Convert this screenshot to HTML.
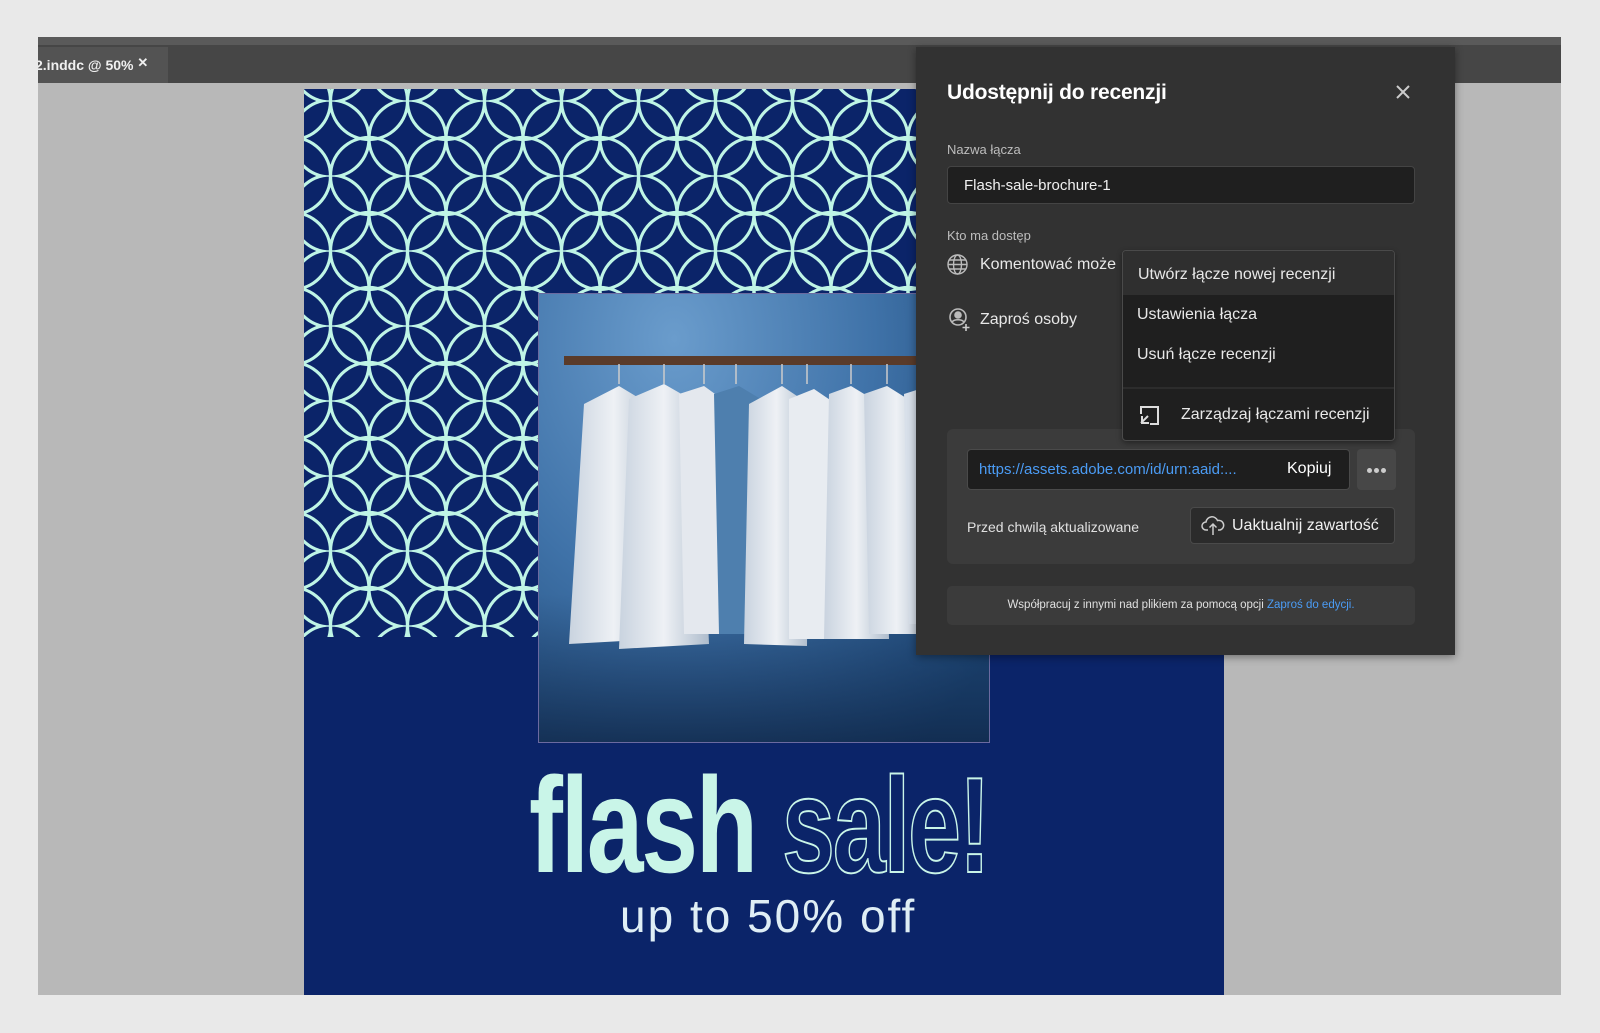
<!DOCTYPE html>
<html><head><meta charset="utf-8">
<style>
*{margin:0;padding:0;box-sizing:border-box}
body{width:1600px;height:1033px;background:#e9e9e9;position:relative;overflow:hidden;font-family:"Liberation Sans",sans-serif}
.a{position:absolute}
.t{color:#e8e8e8;white-space:nowrap}
</style></head><body>
<div class="a" style="left:38px;top:37px;width:1523px;height:958px;background:#b8b8b8"></div>
<div class="a" style="left:38px;top:37px;width:1523px;height:8px;background:#5a5a5a"></div>
<div class="a" style="left:38px;top:45px;width:1523px;height:38px;background:#464646"></div>
<div class="a" style="left:38px;top:47px;width:130px;height:36px;background:#535353"></div>
<div class="a t" style="left:35px;top:57px;font-size:14px;font-weight:bold;color:#f0f0f0">2.inddc @ 50% <span style="font-size:13px;position:relative;top:-3px">✕</span></div>
<div class="a" style="left:30px;top:45px;width:8px;height:40px;background:#e9e9e9"></div>

<!-- page -->
<div class="a" style="left:304px;top:89px;width:920px;height:906px;background:#0b2469;overflow:hidden">
<svg width="920" height="548" style="position:absolute;left:0;top:0">
<defs><pattern id="p" patternUnits="userSpaceOnUse" x="65" y="87" width="77" height="75">
<g fill="none" stroke="#bff5e6" stroke-width="3.2">
<circle cx="0" cy="0" r="38.5"/><circle cx="77" cy="0" r="38.5"/><circle cx="0" cy="75" r="38.5"/><circle cx="77" cy="75" r="38.5"/><circle cx="38.5" cy="37.5" r="38.5"/>
</g></pattern></defs>
<rect width="920" height="548" fill="url(#p)"/>
</svg>
</div>

<!-- photo -->
<div class="a" style="left:538px;top:293px;width:452px;height:450px;background:radial-gradient(ellipse at 30% 10%,#6a9ccc 0%,#3f72a8 45%,#1a426f 90%);border:1px solid #6b6aa0;overflow:hidden">
<svg width="452" height="450">
<defs><linearGradient id="j" x1="0" x2="1"><stop offset="0" stop-color="#c9d3df"/><stop offset=".5" stop-color="#eef1f5"/><stop offset="1" stop-color="#aebccc"/></linearGradient>
<linearGradient id="sh" x1="0" y1="0" x2="0" y2="1"><stop offset="0" stop-color="#1a3a66" stop-opacity="0"/><stop offset="1" stop-color="#10284a" stop-opacity=".8"/></linearGradient></defs>
<rect x="0" y="300" width="452" height="150" fill="url(#sh)"/>
<rect x="25" y="62" width="430" height="9" fill="#5a3b2a"/>
<g stroke="#ccc" stroke-width="1.5" fill="none">
<path d="M80 70v20M125 70v20M165 70v20M197 70v20M243 70v20M268 70v20M312 70v20M348 70v20"/></g>
<path d="M45 110 L80 92 L110 110 L120 345 L30 350 Z" fill="url(#j)"/>
<path d="M90 105 L125 90 L160 110 L170 350 L80 355 Z" fill="url(#j)"/>
<path d="M140 100 L165 92 L190 110 L190 340 L145 340 Z" fill="#e4e8ee"/>
<path d="M175 100 L200 92 L230 110 L235 340 L180 340 Z" fill="#4e7fae"/>
<path d="M210 110 L243 92 L270 110 L268 352 L205 350 Z" fill="url(#j)"/>
<path d="M250 105 L275 95 L300 112 L310 345 L250 345 Z" fill="#e8ecf1"/>
<path d="M290 100 L312 92 L345 112 L350 345 L285 345 Z" fill="url(#j)"/>
<path d="M325 100 L348 92 L380 112 L390 340 L330 340 Z" fill="url(#j)"/>
<path d="M365 100 L390 92 L420 112 L420 330 L370 330 Z" fill="#d8e0ea"/>
</svg>
</div>

<div class="a" style="left:529px;top:757px;font-size:136px;font-weight:bold;color:#c9f5e8;transform:scaleX(.75);transform-origin:left top;letter-spacing:-3px;line-height:1">flash</div>
<div class="a" style="left:782px;top:757px;font-size:136px;font-weight:bold;color:transparent;-webkit-text-stroke:2px #c9f5e8;transform:scaleX(.7);transform-origin:left top;letter-spacing:-3px;line-height:1">sale!</div>
<div class="a" style="left:620px;top:893px;font-size:46px;color:#dfeef5;line-height:1;letter-spacing:2px">up to 50% off</div>

<!-- panel -->
<div class="a" style="left:916px;top:47px;width:539px;height:608px;background:#323232;box-shadow:0 2px 8px rgba(0,0,0,.4)"></div>
<div class="a t" style="left:947px;top:81px;font-size:21px;font-weight:bold;color:#fff;letter-spacing:-.2px">Udostępnij do recenzji</div>
<svg class="a" style="left:1395px;top:84px" width="16" height="16"><path d="M2 2L14 14M14 2L2 14" stroke="#ccc" stroke-width="2"/></svg>
<div class="a t" style="left:947px;top:142px;font-size:13px;color:#bdbdbd">Nazwa łącza</div>
<div class="a" style="left:947px;top:166px;width:468px;height:38px;background:#1f1f1f;border:1px solid #444;border-radius:4px"></div>
<div class="a t" style="left:964px;top:177px;font-size:15px;color:#f0f0f0">Flash-sale-brochure-1</div>
<div class="a t" style="left:947px;top:228px;font-size:13px;color:#bdbdbd">Kto ma dostęp</div>
<svg class="a" style="left:947px;top:254px" width="21" height="21" fill="none" stroke="#bbb" stroke-width="1.4"><circle cx="10.5" cy="10.5" r="9.5"/><ellipse cx="10.5" cy="10.5" rx="4" ry="9.5"/><path d="M1 10.5h19M2.5 6h16M2.5 15h16"/></svg>
<div class="a t" style="left:980px;top:256px;font-size:16px">Komentować może</div>
<svg class="a" style="left:948px;top:308px" width="24" height="24" fill="none" stroke="#bbb" stroke-width="1.6"><circle cx="10" cy="9" r="8"/><circle cx="10" cy="7" r="3" fill="#bbb"/><path d="M4 14c2-3 10-3 12 0"/><path d="M18 16v7M14.5 19.5h7" stroke="#ccc"/></svg>
<div class="a t" style="left:980px;top:311px;font-size:16px">Zaproś osoby</div>

<div class="a" style="left:947px;top:429px;width:468px;height:135px;background:#3b3b3b;border-radius:6px"></div>
<div class="a" style="left:967px;top:449px;width:383px;height:41px;background:#1e1e1e;border:1px solid #4a4a4a;border-radius:4px"></div>
<div class="a t" style="left:979px;top:461px;font-size:15px;color:#4b9cf5">https://assets.adobe.com/id/urn:aaid:...</div>
<div class="a t" style="left:1287px;top:460px;font-size:16px;color:#fff">Kopiuj</div>
<div class="a" style="left:1357px;top:449px;width:39px;height:41px;background:#474747;border-radius:4px"></div>
<div class="a" style="left:1367px;top:468px;width:5px;height:5px;border-radius:50%;background:#ccc;box-shadow:7px 0 #ccc,14px 0 #ccc"></div>
<div class="a t" style="left:967px;top:519px;font-size:14px;color:#e0e0e0">Przed chwilą aktualizowane</div>
<div class="a" style="left:1190px;top:507px;width:205px;height:37px;background:#2b2b2b;border:1px solid #4a4a4a;border-radius:4px"></div>
<svg class="a" style="left:1201px;top:514px" width="24" height="22" fill="none" stroke="#ccc" stroke-width="1.5"><path d="M7 16H5a4 4 0 0 1 0-8 6 6 0 0 1 11.5-1.5A4.5 4.5 0 0 1 19 16h-2"/><path d="M12 21V10M8.5 13.5L12 10l3.5 3.5"/></svg>
<div class="a t" style="left:1232px;top:517px;font-size:16px;color:#f0f0f0">Uaktualnij zawartość</div>

<div class="a" style="left:947px;top:586px;width:468px;height:39px;background:#3b3b3b;border-radius:5px"></div>
<div class="a t" style="left:947px;top:599px;width:468px;text-align:center;font-size:11.5px;color:#e0e0e0">Współpracuj z innymi nad plikiem za pomocą opcji <span style="color:#4b9cf5">Zaproś do edycji.</span></div>

<!-- dropdown -->
<div class="a" style="left:1122px;top:250px;width:273px;height:191px;background:#1f1f1f;border:1px solid #4a4a4a;border-radius:4px;box-shadow:0 2px 6px rgba(0,0,0,.4);overflow:hidden">
<div style="height:44px;background:#2f2f2f"></div>
<div style="position:absolute;left:0;top:136px;width:100%;height:2px;background:#2c2c2c"></div>
</div>
<div class="a t" style="left:1138px;top:266px;font-size:16px">Utwórz łącze nowej recenzji</div>
<div class="a t" style="left:1137px;top:306px;font-size:16px">Ustawienia łącza</div>
<div class="a t" style="left:1137px;top:346px;font-size:16px">Usuń łącze recenzji</div>
<svg class="a" style="left:1138px;top:404px" width="22" height="22" fill="none" stroke="#ddd" stroke-width="2"><path d="M3 10V3h17v17h-8"/><path d="M3 19l7-7M4 12v7h7" /></svg>
<div class="a t" style="left:1181px;top:406px;font-size:16px">Zarządzaj łączami recenzji</div>
</body></html>
